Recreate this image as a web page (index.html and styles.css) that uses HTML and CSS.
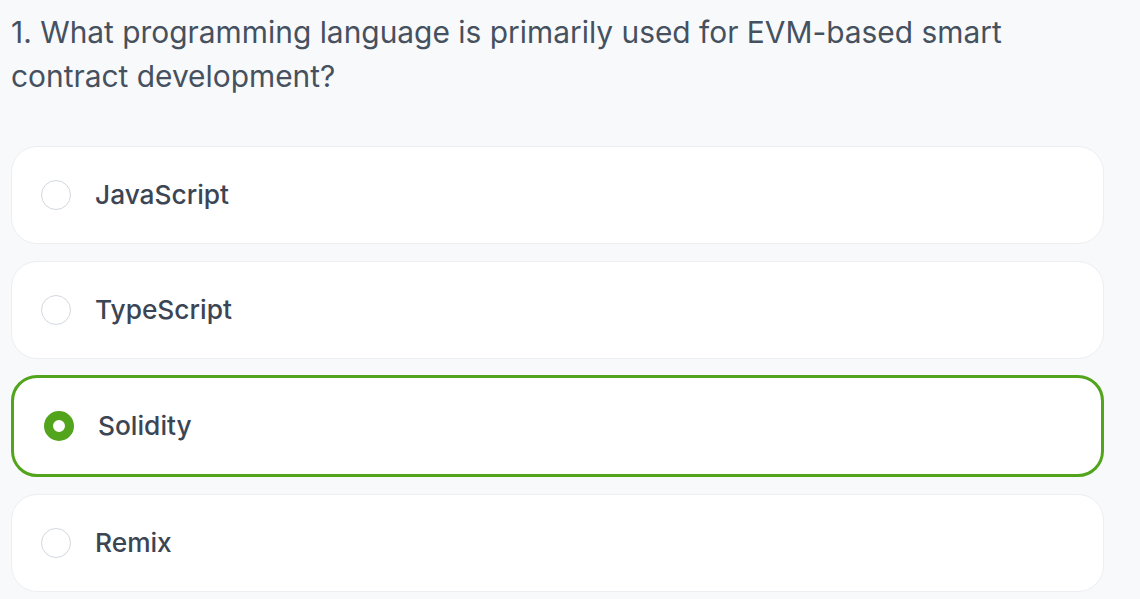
FILE: index.html
```html
<!DOCTYPE html>
<html lang="en">
<head>
<meta charset="utf-8">
<title>Quiz</title>
<link rel="stylesheet" href="styles.css">
</head>
<body>
<main class="quiz">
  <h2 class="question">1. What programming language is primarily used for EVM-based smart contract development?</h2>
  <div class="options">
    <label class="option"><span class="radio"></span><span class="label">JavaScript</span></label>
    <label class="option"><span class="radio"></span><span class="label">TypeScript</span></label>
    <label class="option selected"><span class="radio"></span><span class="label">Solidity</span></label>
    <label class="option"><span class="radio"></span><span class="label">Remix</span></label>
  </div>
</main>
</body>
</html>
```
FILE: styles.css
```css
html, body {
  margin: 0;
  background: #f8f9fb;
}
body {
  font-family: Inter, "Noto Sans", sans-serif;
  color: #3b4554;
}
.quiz {
  padding: 10px 36px 0 11px;
}
.question {
  margin: 0 0 48px 0;
  font-size: 29.9px;
  font-weight: 400;
  line-height: 44px;
  color: #465160;
  max-width: 1020px;
}
.options {
  display: flex;
  flex-direction: column;
  gap: 16.5px;
}
.option {
  display: flex;
  align-items: center;
  gap: 24px;
  padding: 33px 29px;
  background: #ffffff;
  border: 1px solid #eceef2;
  border-radius: 26px;
}
.option.selected {
  border: 3px solid #52a41c;
  padding-left: 30px;
}
.radio {
  width: 30px;
  height: 30px;
  box-sizing: border-box;
  border: 1.5px solid #d3d7de;
  border-radius: 50%;
  flex: none;
}
.selected .radio {
  border: 9px solid #52a41c;
}
.label {
  font-size: 26.3px;
  font-weight: 500;
  line-height: 30px;
  color: #3b4554;
}
```
